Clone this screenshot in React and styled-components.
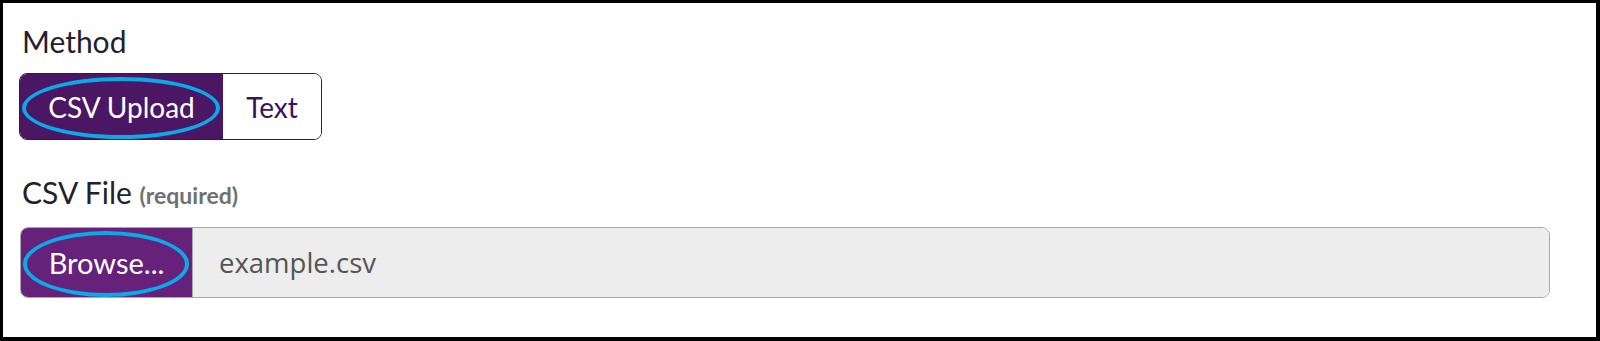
import React from 'react';
import styled, { createGlobalStyle } from 'styled-components';

const GlobalStyle = createGlobalStyle`
  html, body {
    margin: 0;
    padding: 0;
    background: #ffffff;
  }
  * {
    box-sizing: border-box;
  }
`;

const App = () => {
  return (
    <>
      <GlobalStyle />
      <Frame>
        <Field>
          <Label>Method</Label>
          <Segmented>
            <Segment active>
              CSV Upload
              <Highlight />
            </Segment>
            <Segment>Text</Segment>
          </Segmented>
        </Field>
        <Field>
          <Label>
            CSV File <Hint>(required)</Hint>
          </Label>
          <FileInput>
            <BrowseButton>
              Browse...
              <Highlight />
            </BrowseButton>
            <FileName>example.csv</FileName>
          </FileInput>
        </Field>
      </Frame>
    </>
  );
};

const Frame = styled.div`
  width: 1600px;
  height: 341px;
  border-style: solid;
  border-color: #000;
  border-width: 3px 4px 4px 3px;
  background: #fff;
  padding: 18px 48px 0 16px;
  display: flex;
  flex-direction: column;
  gap: 32px;
  font-family: Lato, "Open Sans", sans-serif;
`;

const Field = styled.div`
  display: flex;
  flex-direction: column;
  gap: 12px;
`;

const Label = styled.div`
  font-size: 30px;
  line-height: 40px;
  color: #23212a;
  margin-left: 3px;
`;

const Hint = styled.span`
  font-size: 23px;
  font-weight: 700;
  color: #707070;
`;

const Segmented = styled.div`
  display: flex;
  align-self: flex-start;
  height: 67px;
  border: 1.5px solid #3b1060;
  border-radius: 8px;
  overflow: hidden;
`;

const Segment = styled.div`
  position: relative;
  display: flex;
  align-items: center;
  justify-content: center;
  width: ${(p) => (p.active ? '203px' : '98px')};
  font-size: 28px;
  color: ${(p) => (p.active ? '#ffffff' : '#3b1060')};
  background: ${(p) => (p.active ? '#4b1765' : '#ffffff')};
`;

const Highlight = styled.span`
  position: absolute;
  left: 2px;
  right: 3px;
  top: 3px;
  bottom: 0px;
  border: 4px solid #0aa9e8;
  border-radius: 50%;
  pointer-events: none;
`;

const FileInput = styled.div`
  display: flex;
  height: 71px;
  width: 1530px;
  border: 1.5px solid #a8a8a8;
  border-radius: 8px;
  overflow: hidden;
  margin-left: 1px;
`;

const BrowseButton = styled.div`
  position: relative;
  flex: 0 0 172px;
  display: flex;
  align-items: center;
  justify-content: center;
  background: #66217b;
  color: #ffffff;
  font-size: 29px;
  border-right: 1.5px solid #a8a8a8;
`;

const FileName = styled.div`
  flex: 1;
  display: flex;
  align-items: center;
  padding-left: 26px;
  background: #ededed;
  color: #555555;
  font-family: "Open Sans", sans-serif;
  font-size: 27.5px;
`;

export default App;
